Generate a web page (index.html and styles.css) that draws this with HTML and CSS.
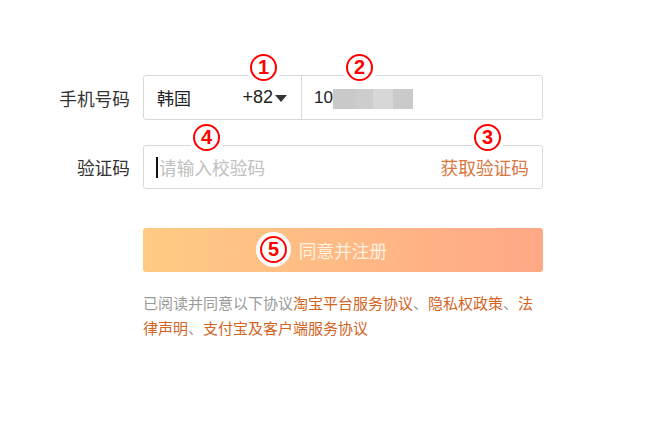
FILE: index.html
```html
<!DOCTYPE html>
<html lang="zh-CN">
<head>
<meta charset="utf-8">
<link rel="stylesheet" href="styles.css">
</head>
<body>
<div class="page">
  <div class="form">
    <div class="row row-phone">
      <div class="label">手机号码</div>
      <div class="box phone">
        <div class="country">
          <span class="cname">韩国</span>
          <span class="code">+82<span class="caret"></span></span>
        </div>
        <div class="number">
          <span>10</span>
          <span class="mask m1"></span><span class="mask m2"></span><span class="mask m3"></span><span class="mask m4"></span>
        </div>
      </div>
    </div>

    <div class="row row-verify">
      <div class="label">验证码</div>
      <div class="box verify">
        <div class="input"><span class="cursor"></span><span class="ph">请输入校验码</span></div>
        <span class="getcode">获取验证码</span>
      </div>
    </div>

    <div class="row row-submit">
      <div class="label"></div>
      <button class="submit">同意并注册</button>
    </div>

    <div class="row row-agree">
      <div class="label"></div>
      <p class="agree">已阅读并同意以下协议<a>淘宝平台服务协议</a>、<a>隐私权政策</a>、<a>法律声明</a>、<a>支付宝及客户端服务协议</a></p>
    </div>
  </div>

  <span class="badge b1">1</span>
  <span class="badge b2">2</span>
  <span class="badge b3">3</span>
  <span class="badge b4">4</span>
  <span class="badge b5">5</span>
</div>
</body>
</html>
```

FILE: styles.css
```css
html, body {
  margin: 0;
  padding: 0;
  background: #fff;
}
body {
  width: 660px;
  height: 427px;
  overflow: hidden;
  font-family: "Noto Sans CJK SC", "Noto Sans", sans-serif;
  color: #333;
}
.page {
  position: relative;
  width: 660px;
  height: 427px;
}
.form {
  display: flex;
  flex-direction: column;
  padding: 75px 0 0 40px;
}
.row {
  display: flex;
  align-items: center;
  gap: 13px;
}
.row-verify { margin-top: 25px; }
.row-submit { margin-top: 39px; }
.row-agree { margin-top: 18px; align-items: flex-start; }
.label {
  flex: 0 0 90px;
  text-align: right;
  font-size: 17.7px;
  color: #333;
}
.box {
  box-sizing: border-box;
  width: 400px;
  border: 1px solid #d9d9d9;
  border-radius: 3px;
  display: flex;
  align-items: center;
  font-size: 16px;
}
.phone {
  height: 45px;
}
.country {
  width: 158px;
  height: 100%;
  border-right: 1px solid #d9d9d9;
  display: flex;
  align-items: center;
  justify-content: space-between;
  padding: 0 14px 0 13px;
  box-sizing: border-box;
  color: #222;
  font-size: 17px;
}
.code {
  display: flex;
  align-items: center;
  font-family: "Liberation Sans", sans-serif;
  font-size: 18px;
}
.caret {
  width: 0;
  height: 0;
  border-left: 6px solid transparent;
  border-right: 6px solid transparent;
  border-top: 7px solid #333;
  margin-left: 2px;
  margin-top: 2px;
}
.number {
  display: flex;
  align-items: center;
  padding-left: 12px;
  font-family: "Liberation Sans", sans-serif;
  font-size: 17px;
  color: #222;
}
.mask {
  display: inline-block;
  height: 20px;
  margin-top: 2px;
}
.m1 { width: 23px; background: #c9c9c9; }
.m2 { width: 17px; background: #cdcdcd; }
.m3 { width: 20px; background: #d7d7d7; }
.m4 { width: 20px; background: #cacaca; }
.verify {
  height: 44px;
  justify-content: space-between;
  padding: 0 13px 0 12px;
}
.input {
  display: flex;
  align-items: center;
}
.cursor {
  width: 2px;
  height: 21px;
  background: #111;
  margin-right: 1px;
}
.ph {
  color: #c0c0c0;
  font-size: 17.7px;
}
.getcode {
  color: #d9773f;
  font-size: 17.7px;
}
.submit {
  width: 400px;
  height: 44px;
  border: 0;
  border-radius: 3px;
  background: linear-gradient(90deg, #ffcb84 0%, #ffa886 100%);
  color: #fff3e2;
  font-family: "Noto Sans CJK SC", sans-serif;
  font-size: 17.7px;
  padding: 0;
  cursor: pointer;
}
.agree {
  width: 400px;
  margin: 0;
  font-size: 15px;
  line-height: 25px;
  color: #999;
}
.agree a {
  color: #d2641f;
}
.badge {
  position: absolute;
  box-sizing: border-box;
  width: 27px;
  height: 27px;
  border: 2px solid #ff0000;
  border-radius: 50%;
  background: #fff;
  box-shadow: 0 0 0 4px #fff;
  color: #ff0000;
  font-family: "Liberation Sans", sans-serif;
  font-weight: bold;
  font-size: 20px;
  line-height: 23px;
  text-align: center;
}
.b1 { left: 250px; top: 54px; }
.b2 { left: 346px; top: 54px; }
.b3 { left: 474px; top: 124px; }
.b4 { left: 193px; top: 124px; }
.b5 { left: 260px; top: 236px; }
```
